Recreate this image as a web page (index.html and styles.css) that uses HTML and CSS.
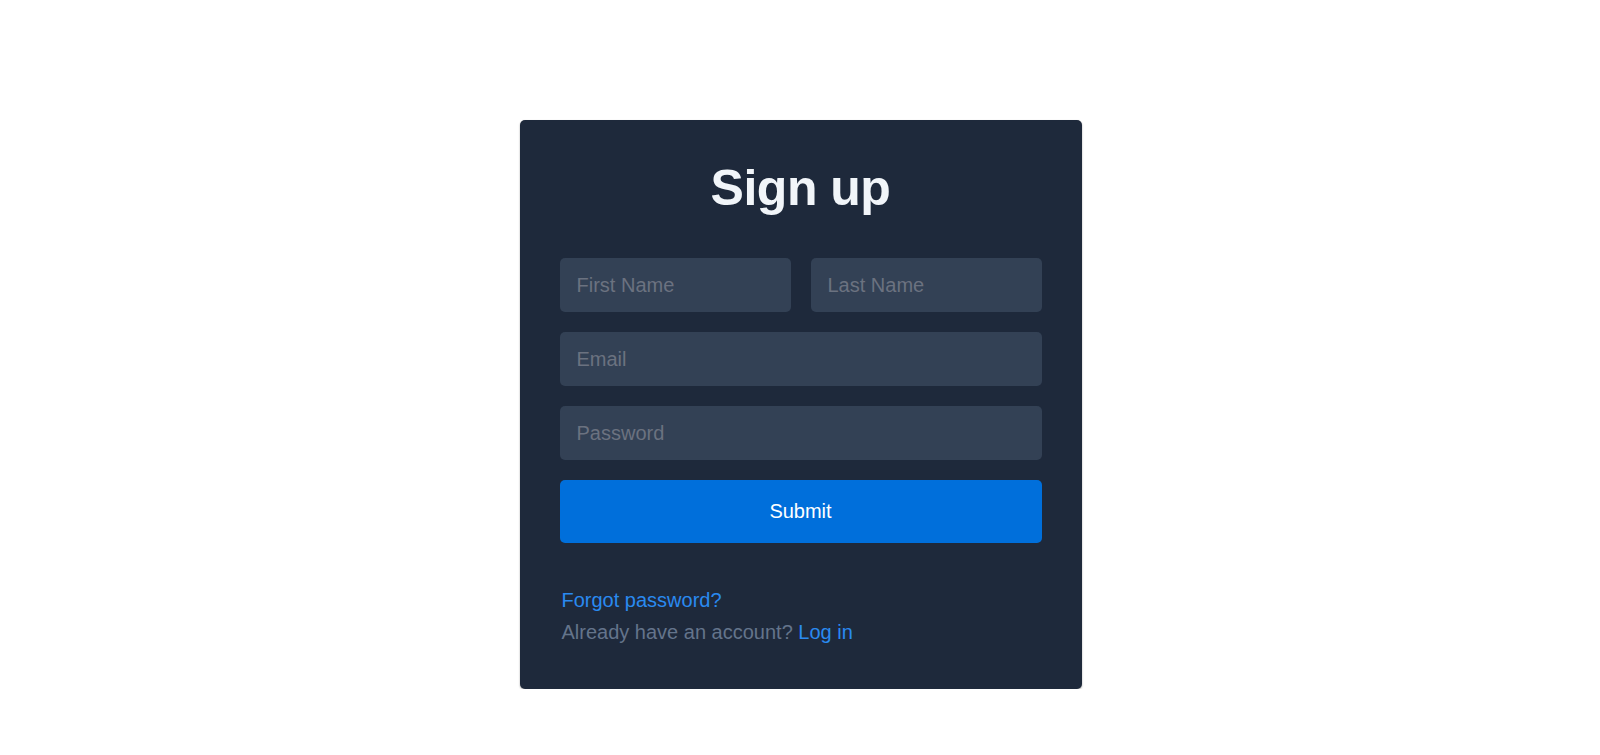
FILE: index.html
```html
<!DOCTYPE html>
<html lang="en">
<head>
<meta charset="utf-8">
<title>Sign up</title>
<link rel="stylesheet" href="styles.css">
</head>
<body>
<main class="page">
  <form class="card" onsubmit="return false">
    <h1 class="title">Sign up</h1>
    <div class="row">
      <input class="field" type="text" placeholder="First Name">
      <input class="field" type="text" placeholder="Last Name">
    </div>
    <input class="field" type="email" placeholder="Email">
    <input class="field" type="password" placeholder="Password">
    <button class="submit" type="submit">Submit</button>
    <div class="links">
      <a class="link" href="#">Forgot password?</a>
      <p class="muted">Already have an account? <a class="link" href="#">Log in</a></p>
    </div>
  </form>
</main>
</body>
</html>
```
FILE: styles.css
```css
* { box-sizing: border-box; }
html, body { margin: 0; padding: 0; background: #ffffff; }
body { font-family: "Liberation Sans", Arial, sans-serif; }
.page {
  display: flex;
  justify-content: center;
  padding-top: 120px;
}
.card {
  width: 562px;
  margin-left: 1px;
  background: #1e293b;
  border-radius: 5px;
  padding: 40px 40px 41px;
  display: flex;
  flex-direction: column;
  gap: 20px;
  box-shadow: 0 1px 2px rgba(0,0,0,0.35);
}
.title {
  margin: 0 0 22px;
  text-align: center;
  font-size: 50px;
  line-height: 56px;
  font-weight: 700;
  letter-spacing: -0.5px;
  color: #f1f5f9;
}
.row {
  display: grid;
  grid-template-columns: 1fr 1fr;
  gap: 20px;
}
.field {
  width: 100%;
  height: 54px;
  border: none;
  outline: none;
  border-radius: 5px;
  background: #334155;
  padding: 0 16px 0 17px;
  font-family: inherit;
  font-size: 20px;
  color: #e2e8f0;
}
.field::placeholder { color: #6b7280; }
.submit {
  height: 63px;
  border: none;
  border-radius: 5px;
  background: #006fdb;
  color: #ffffff;
  font-family: inherit;
  font-size: 20px;
  cursor: pointer;
}
.links {
  margin-top: 21px;
  padding-left: 2px;
  display: flex;
  flex-direction: column;
  align-items: flex-start;
  font-size: 20px;
  line-height: 32px;
}
.link { color: #2a8af0; text-decoration: none; }
.muted { margin: 0; color: #64748b; }
```
